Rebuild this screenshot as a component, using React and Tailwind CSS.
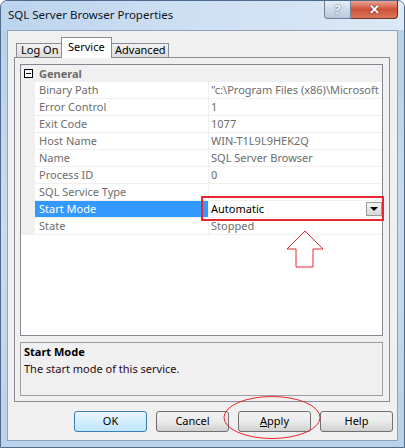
import React from "react";

const rows = [
  ["Binary Path", "\"c:\\Program Files (x86)\\Microsoft SQL Server\\90\\Shared\\sqlbrowser.exe\""],
  ["Error Control", "1"],
  ["Exit Code", "1077"],
  ["Host Name", "WIN-T1L9L9HEK2Q"],
  ["Name", "SQL Server Browser"],
  ["Process ID", "0"],
  ["SQL Service Type", ""],
  ["Start Mode", "Automatic", true],
  ["State", "Stopped"],
];

function WinButton({ children, primary }) {
  return (
    <button
      className={
        primary
          ? "w-[73px] h-[21px] rounded-[3px] border border-[#3c7fb1] bg-gradient-to-b from-[#eaf6fd] to-[#bee6fd] text-black"
          : "w-[73px] h-[21px] rounded-[3px] border border-[#707070] bg-gradient-to-b from-[#f2f2f2] via-[#ebebeb] to-[#cfcfcf] text-black"
      }
    >
      {children}
    </button>
  );
}

export default function App() {
  return (
    <div className="relative w-[405px] h-[448px] overflow-hidden bg-white">
      <div
        className="flex flex-col w-[405px] h-[448px] rounded-t-[7px] border border-[#4e6a8c] bg-gradient-to-b from-[#b7cfe9] via-[#c9dbef] to-[#bcd2ea] text-[11px] text-black"
        style={{ fontFamily: '"Noto Sans", "Open Sans", sans-serif' }}
      >
        {/* title bar */}
        <div className="flex h-[29px] shrink-0 justify-between bg-gradient-to-r from-[#bcd4ee] via-[#cfe0f3] to-[#dce9f6] rounded-t-[6px]">
          <div className="pl-[7px] pt-[5px] text-[11.5px] text-[#10151e]">SQL Server Browser Properties</div>
          <div className="flex pr-[6px] h-[19px]">
            <div className="flex w-[27px] h-[18px] items-center justify-center rounded-bl-[4px] border border-t-0 border-[#6e7f96] bg-gradient-to-b from-[#e6eef7] to-[#b8c8dc] text-[13px] font-bold text-[#f6f9fc] [text-shadow:0_0_2px_#33455e]">
              ?
            </div>
            <div className="flex w-[47px] h-[18px] items-center justify-center rounded-br-[4px] border border-t-0 border-l-0 border-[#6f2f26] bg-gradient-to-b from-[#e8a493] via-[#cf5239] to-[#d9775c] text-[13px] font-bold text-white [text-shadow:0_0_2px_#3b0f08]">
              ✕
            </div>
          </div>
        </div>

        {/* client area */}
        <div className="flex flex-col mx-[6px] w-[391px] h-[411px] border border-[#8fa3bd] bg-[#f0f0f0]">
          {/* tabs */}
          <div className="flex items-end h-[26px] pl-[8px]">
            <div className="flex items-center h-[14px] w-[46px] border border-b-0 border-[#898c95] bg-gradient-to-b from-[#f2f2f2] to-[#dcdcdc] pl-[4px] text-black whitespace-nowrap">
              Log On
            </div>
            <div className="relative z-10 -ml-[1px] -mb-[1px] flex items-start h-[21px] w-[51px] border border-b-0 border-[#898c95] bg-white pl-[6px] pt-[1px] whitespace-nowrap">
              Service
            </div>
            <div className="flex items-center -ml-[1px] h-[14px] w-[58px] border border-b-0 border-l-0 border-[#898c95] bg-gradient-to-b from-[#f2f2f2] to-[#dcdcdc] pl-[4px] whitespace-nowrap">
              Advanced
            </div>
          </div>

          {/* tab page */}
          <div className="flex flex-col ml-[6px] w-[376px] h-[345px] border border-[#898c95] bg-[#f0f0f0] px-[5px] pt-[6px]">
            {/* property grid */}
            <div className="relative w-[363px] h-[272px] border border-[#828790] bg-white overflow-hidden">
              <div className="flex h-[17px] items-center bg-[#f0f0f0] border-b border-[#f0f0f0]">
                <div className="flex w-[14px] justify-center">
                  <div className="flex w-[9px] h-[9px] items-center justify-center border border-black bg-white">
                    <div className="w-[5px] h-[1px] bg-black" />
                  </div>
                </div>
                <div className="pl-[4px] pt-[2px] font-bold text-[#6d6d6d]">General</div>
              </div>
              {rows.map(([name, value, selected]) => (
                <div key={name} className="flex h-[17px] border-b border-[#f0f0f0]">
                  <div className="w-[14px] shrink-0 bg-[#f0f0f0]" />
                  <div
                    className={
                      selected
                        ? "flex items-center w-[173px] shrink-0 pl-[4px] pt-[1px] bg-[#3399ff] text-white"
                        : "flex items-center w-[173px] shrink-0 pl-[4px] pt-[1px] text-[#6d6d6d]"
                    }
                  >
                    {name}
                  </div>
                  <div className="w-[1px] shrink-0 bg-[#f0f0f0]" />
                  {selected ? (
                    <div className="flex items-center justify-between w-[173px] shrink-0 pl-[2px] text-black">
                      <span className="pt-[1px]">{value}</span>
                      <div className="flex items-center justify-center w-[16px] h-[14px] border border-[#9a9a9a] bg-gradient-to-b from-[#f4f4f4] to-[#d8d8d8]">
                        <div className="w-0 h-0 border-l-[4px] border-r-[4px] border-t-[4px] border-l-transparent border-r-transparent border-t-black" />
                      </div>
                    </div>
                  ) : (
                    <div className="w-[173px] min-w-0 shrink-0 overflow-hidden">
                      <div className="flex items-center h-full pl-[2px] pt-[1px] text-[#6d6d6d] whitespace-nowrap">{value}</div>
                    </div>
                  )}
                </div>
              ))}
            </div>

            {/* description */}
            <div className="mt-[6px] w-[363px] h-[54px] border border-[#a0a0a0] bg-[#f0f0f0] px-[3px] pt-[1px]">
              <div className="font-bold leading-[16px]">Start Mode</div>
              <div className="leading-[17px] text-[#2a0a14]">The start mode of this service.</div>
            </div>
          </div>

          {/* buttons */}
          <div className="flex gap-[9px] pl-[66px] pt-[9px]">
            <WinButton primary>OK</WinButton>
            <WinButton>Cancel</WinButton>
            <WinButton>
              <span className="underline">A</span>pply
            </WinButton>
            <WinButton>Help</WinButton>
          </div>
        </div>
      </div>

      {/* annotations */}
      <div className="absolute left-[201px] top-[196px] w-[183px] h-[25px] border-2 border-[#e8262e] pointer-events-none" />
      <svg className="absolute left-0 top-0 pointer-events-none" width="405" height="448">
        <path d="M305 231 L287 249 L296 249 L296 267 L313 267 L313 249 L323 249 Z" fill="none" stroke="#e8262e" strokeWidth="1" />
        <ellipse cx="272" cy="417.5" rx="48" ry="21" fill="none" stroke="#e8262e" strokeWidth="1" />
      </svg>
    </div>
  );
}
